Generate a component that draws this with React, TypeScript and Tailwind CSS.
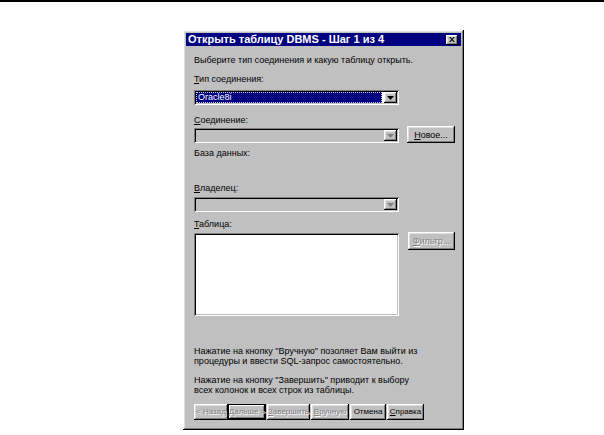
import React from 'react';

const raised =
  'shadow-[inset_-1px_-1px_0_#000,inset_1px_1px_0_#fff,inset_-2px_-2px_0_#808080,inset_2px_2px_0_#dfdfdf]';
const sunken =
  'shadow-[inset_1px_1px_0_#808080,inset_-1px_-1px_0_#fff,inset_2px_2px_0_#000,inset_-2px_-2px_0_#c0c0c0]';
const disabledText = 'text-[#808080] [text-shadow:1px_1px_0_#fff]';

function Arrow({ disabled }: { disabled?: boolean }) {
  return (
    <div className={`w-[13px] h-full bg-[#c0c0c0] flex items-center justify-center ${raised}`}>
      <svg width="7" height="4" viewBox="0 0 7 4">
        <path d="M0 0h7L3.5 4z" fill={disabled ? '#808080' : '#000'} />
      </svg>
    </div>
  );
}

function Combo({ value, disabled }: { value?: string; disabled?: boolean }) {
  return (
    <div className={`w-[205px] h-[15px] p-[2px] flex ${sunken} ${disabled ? 'bg-[#c0c0c0]' : 'bg-white'}`}>
      <div className="flex-1 pr-[2px]">
        {value && (
          <div className="h-full bg-[#000080] text-white border border-dotted border-[#c8c8ff] px-[1px] leading-[9px]">
            {value}
          </div>
        )}
      </div>
      <Arrow disabled={disabled} />
    </div>
  );
}

function Btn({
  children,
  disabled,
  focused,
  className = '',
}: {
  children: React.ReactNode;
  disabled?: boolean;
  focused?: boolean;
  className?: string;
}) {
  return (
    <div
      className={`bg-[#c0c0c0] flex items-center justify-center whitespace-nowrap ${
        focused
          ? 'shadow-[inset_0_0_0_1px_#000,inset_-2px_-2px_0_#000,inset_2px_2px_0_#fff,inset_-3px_-3px_0_#808080]'
          : raised
      } ${disabled ? disabledText : 'text-black'} ${className}`}
    >
      {children}
    </div>
  );
}

export default function App() {
  return (
    <div
      className="w-[604px] h-[435px] bg-white overflow-hidden text-[9px] text-black"
      style={{ fontFamily: '"Liberation Sans", Arial, sans-serif' }}
    >
      <div className="h-[2px] bg-black" />

      {/* dialog window */}
      <div className={`ml-[183px] mt-[28px] w-[281px] h-[400px] bg-[#c0c0c0] p-[3px] flex flex-col ${raised}`}>
        {/* title bar */}
        <div className="h-[13px] bg-[#000080] flex items-center justify-between pl-[2px] pr-[3px]">
          <span className="text-white font-bold text-[11px] leading-none">
            Открыть таблицу DBMS - Шаг 1 из 4
          </span>
          <div className={`w-[12px] h-[10px] bg-[#c0c0c0] flex items-center justify-center ${raised}`}>
            <svg width="6" height="5" viewBox="0 0 8 7">
              <path d="M0 0h2l2 2.5L6 0h2L5 3.5 8 7H6L4 4.5 2 7H0l3-3.5z" fill="#000" />
            </svg>
          </div>
        </div>

        <div className="flex-1 pl-[8px] flex flex-col leading-[12px]">
          <div className="mt-[8px]">Выберите тип соединения и какую таблицу открыть.</div>

          <div className="mt-[7px]">
            <u>Т</u>ип соединения:
          </div>
          <div className="mt-[5px]">
            <Combo value="Oracle8i" />
          </div>

          <div className="mt-[9px]">
            <u>С</u>оединение:
          </div>
          <div className="mt-[2px] flex items-start gap-[8px]">
            <Combo disabled />
            <Btn className="w-[48px] h-[17px] mt-[-2px]">
              <span>
                <u>Н</u>овое...
              </span>
            </Btn>
          </div>

          <div className="mt-[4px]">База данных:</div>

          <div className="mt-[23px]">
            <u>В</u>ладелец:
          </div>
          <div className="mt-[3px]">
            <Combo disabled />
          </div>

          <div className="mt-[6px]">
            <u>Т</u>аблица:
          </div>
          <div className="mt-[3px] flex items-start gap-[9px]">
            <div className={`w-[205px] h-[83px] bg-white ${sunken}`} />
            <Btn disabled className="w-[47px] h-[18px] mt-[-1px]">
              <span>
                <u>Ф</u>ильтр...
              </span>
            </Btn>
          </div>

          <div className="mt-[30px] leading-[10px]">
            Нажатие на кнопку "Вручную" позоляет Вам выйти из
            <br />
            процедуры и ввести SQL-запрос самостоятельно.
          </div>
          <div className="mt-[9px] leading-[10px]">
            Нажатие на кнопку "Завершить" приводит к выбору
            <br />
            всех колонок и всех строк из таблицы.
          </div>

          <div className="mt-[9px] flex text-[8px]">
            <Btn disabled className="w-[34px] h-[16px]">
              &lt; Назад
            </Btn>
            <Btn disabled focused className="w-[38px] h-[16px]">
              <span>
                <u>Д</u>альше &gt;
              </span>
            </Btn>
            <Btn disabled className="w-[43px] h-[16px] ml-[1px]">
              <span>
                <u>З</u>авершить
              </span>
            </Btn>
            <Btn disabled className="w-[38px] h-[16px] ml-[1px]">
              <span>
                <u>В</u>ручную
              </span>
            </Btn>
            <Btn className="w-[36px] h-[16px] ml-[1px]">Отмена</Btn>
            <Btn className="w-[37px] h-[16px] ml-[1px]">
              <span>
                <u>С</u>правка
              </span>
            </Btn>
          </div>
        </div>
      </div>
    </div>
  );
}
